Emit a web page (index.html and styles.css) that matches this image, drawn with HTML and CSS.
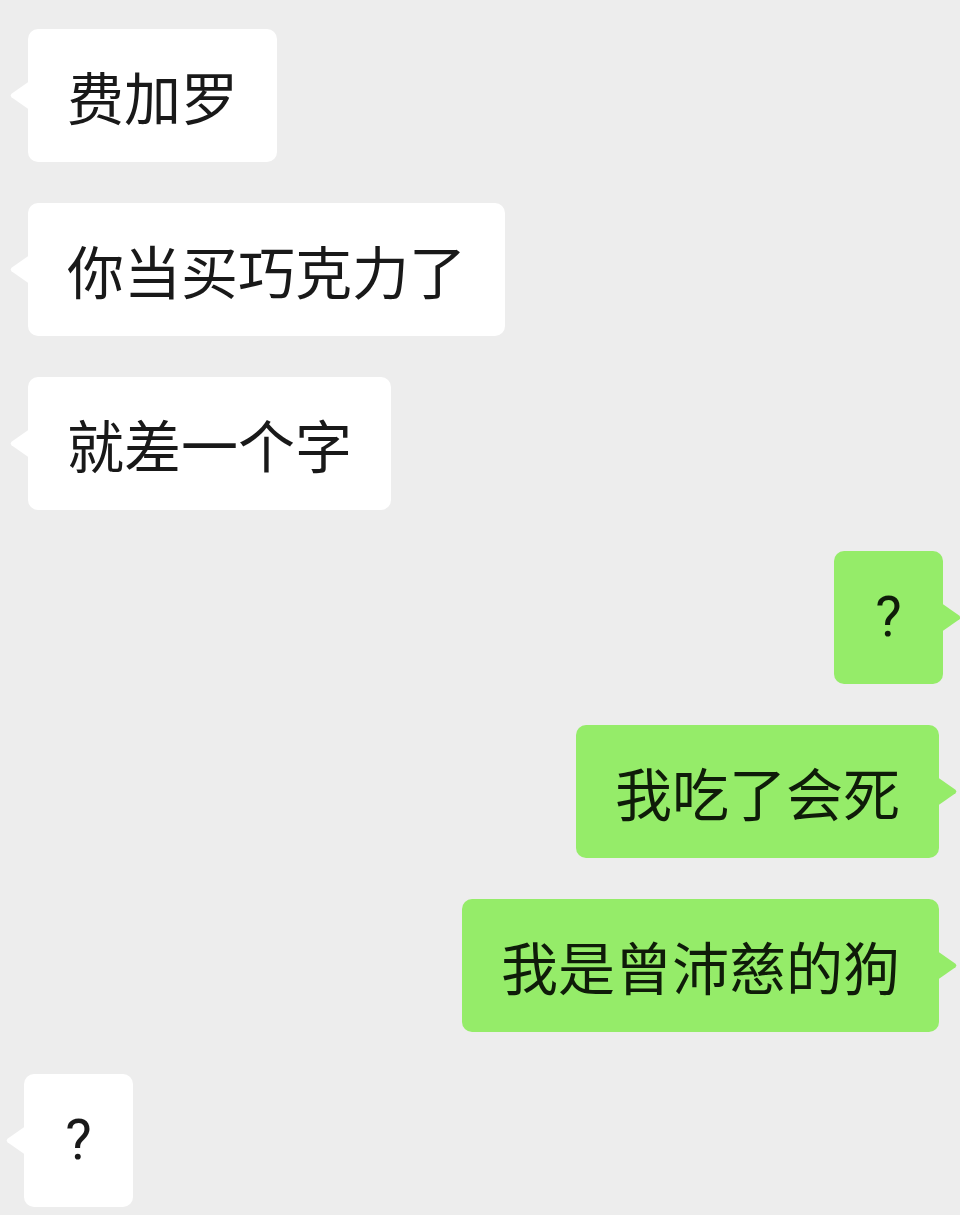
FILE: index.html
```html
<!DOCTYPE html>
<html lang="zh-CN">
<head>
<meta charset="utf-8">
<title>聊天</title>
<link rel="stylesheet" href="styles.css">
</head>
<body>
<main class="chat">
  <div class="row in"><div class="bubble">费加罗</div></div>
  <div class="row in"><div class="bubble">你当买巧克力了</div></div>
  <div class="row in"><div class="bubble">就差一个字</div></div>
  <div class="row out shift-out"><div class="bubble short">?</div></div>
  <div class="row out"><div class="bubble">我吃了会死</div></div>
  <div class="row out"><div class="bubble">我是曾沛慈的狗</div></div>
  <div class="row in shift-in"><div class="bubble short">?</div></div>
</main>
</body>
</html>
```

FILE: styles.css
```css
html, body {
  margin: 0;
  padding: 0;
  background: #ededed;
}

body {
  width: 960px;
  height: 1215px;
  overflow: hidden;
  font-family: "Noto Sans CJK SC", "Noto Sans", sans-serif;
  color: #191919;
}

.chat {
  display: flex;
  flex-direction: column;
  gap: 41px;
  padding: 29px 21px 0 28px;
}

.row {
  display: flex;
}

.row.in {
  justify-content: flex-start;
}

.row.out {
  justify-content: flex-end;
}

.shift-out {
  margin-right: -4px;
}

.shift-in {
  margin-left: -4px;
  margin-top: 1px;
}

.bubble {
  position: relative;
  padding: 27px 39px;
  font-size: 57px;
  line-height: 79px;
  border-radius: 10px;
  white-space: nowrap;
}

.bubble.short {
  box-sizing: border-box;
  width: 109px;
  padding: 27px 0;
  text-align: center;
  font-family: Roboto, "Noto Sans", sans-serif;
  font-size: 56px;
}

.in .bubble {
  background: #ffffff;
}

.out .bubble {
  background: #95ec69;
  color: #0f1c09;
}

.bubble::before {
  content: "";
  position: absolute;
  top: 50%;
  width: 19px;
  height: 28px;
  margin-top: -14px;
  background: inherit;
}

.in .bubble::before {
  left: -18px;
  clip-path: polygon(100% 0, 8% 44%, 3% 50%, 8% 56%, 100% 100%);
}

.out .bubble::before {
  right: -18px;
  clip-path: polygon(0 0, 92% 44%, 97% 50%, 92% 56%, 0 100%);
}
```
